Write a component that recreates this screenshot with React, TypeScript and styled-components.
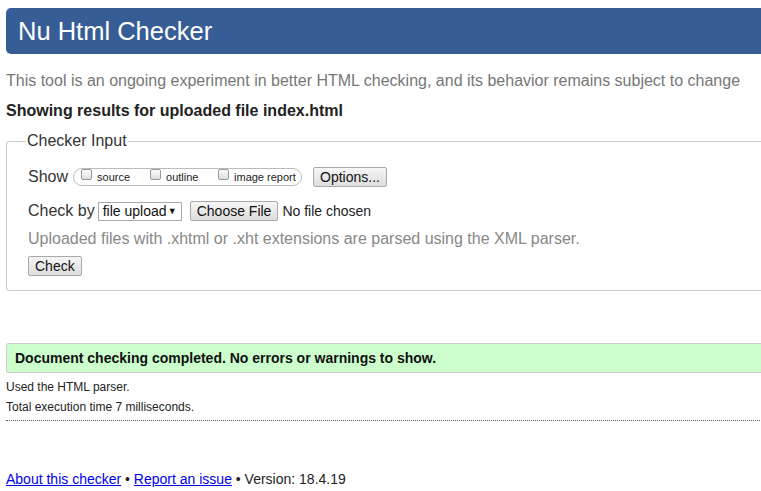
import React from 'react'
import styled, { createGlobalStyle } from 'styled-components'

const GlobalStyle = createGlobalStyle`
  html, body {
    margin: 0;
    padding: 0;
    background: #fff;
    overflow: hidden;
  }
  body {
    font-family: 'Liberation Sans', Arial, sans-serif;
    color: #222;
  }
`

const Page = styled.div`
  width: 790px;
  padding: 8px 0 0 6px;
`

const Banner = styled.h1`
  margin: 0;
  height: 46px;
  box-sizing: border-box;
  padding: 0 12px;
  display: flex;
  align-items: center;
  background: #365d95;
  color: #fff;
  font-size: 25.5px;
  font-weight: normal;
  border-radius: 5px 0 0 5px;
`

const Intro = styled.p`
  margin: 18px 0 0;
  font-size: 16px;
  color: #777;
`

const ResultsFor = styled.p`
  margin: 12px 0 0;
  font-size: 16px;
  font-weight: bold;
  color: #222;
`

const Fieldset = styled.fieldset`
  margin: 12px 0 0;
  padding: 6px 0 14px 21px;
  border: 1px solid #ccc;
  border-right: none;
  border-radius: 4px 0 0 4px;
`

const Legend = styled.legend`
  padding: 0 1px;
  margin-left: -2px;
  font-size: 16px;
  color: #333;
`

const Row = styled.div<{ $gap: number }>`
  display: flex;
  align-items: center;
  font-size: 16px;
  color: #333;
  height: 20px;
  margin-top: ${({ $gap }) => $gap}px;
`

const Pill = styled.div`
  display: flex;
  align-items: center;
  height: 18px;
  box-sizing: border-box;
  margin-left: 5px;
  padding: 0 5px 0 7px;
  border: 1px solid #bbb;
  border-radius: 9px;
  font-size: 11px;
  color: #222;
`

const Option = styled.label<{ $w: number }>`
  display: flex;
  align-items: center;
  width: ${({ $w }) => $w}px;
  white-space: nowrap;
`

const Box = styled.span`
  display: inline-block;
  width: 11px;
  height: 11px;
  box-sizing: border-box;
  border: 1px solid #999;
  border-radius: 2px;
  background: linear-gradient(#fcfcfc, #dedede);
  margin: -5px 5px 0 0;
`

const Btn = styled.span<{ $ml?: number }>`
  display: inline-flex;
  align-items: center;
  height: 20px;
  box-sizing: border-box;
  padding: 0 6px;
  margin-left: ${({ $ml }) => $ml ?? 0}px;
  border: 1px solid #a9a9a9;
  border-radius: 2px;
  background: linear-gradient(#f6f6f6, #dddddd);
  font-size: 14px;
  color: #111;
`

const Select = styled.span`
  display: inline-flex;
  align-items: center;
  justify-content: space-between;
  width: 84px;
  height: 19px;
  box-sizing: border-box;
  margin-left: 3px;
  padding: 0 4px;
  border: 1px solid #a9a9a9;
  background: #fff;
  font-size: 14px;
  color: #111;
`

const Arrow = styled.span`
  font-size: 9px;
`

const NoFile = styled.span`
  margin-left: 4px;
  font-size: 14px;
  color: #222;
`

const Hint = styled.div`
  margin-top: 9px;
  font-size: 16px;
  color: #888;
`

const Success = styled.div`
  margin-top: 52px;
  height: 30px;
  box-sizing: border-box;
  display: flex;
  align-items: center;
  padding-left: 8px;
  background: #ccffcc;
  border: 1px solid #ccc;
  border-right: none;
  border-radius: 3px 0 0 3px;
  font-size: 14px;
  font-weight: bold;
  color: #111;
`

const Detail = styled.p<{ $mt: number }>`
  margin: ${({ $mt }) => $mt}px 0 0;
  font-size: 12px;
  color: #222;
`

const Dotted = styled.div`
  margin-top: 6px;
  border-top: 1px dotted #555;
  height: 0;
`

const Footer = styled.p`
  margin: 50px 0 0;
  font-size: 14px;
  color: #222;
`

const Link = styled.a`
  color: #00e;
  text-decoration: underline;
`

export default function App() {
  return (
    <Page>
      <GlobalStyle />
      <Banner>Nu Html Checker</Banner>
      <Intro>This tool is an ongoing experiment in better HTML checking, and its behavior remains subject to change</Intro>
      <ResultsFor>Showing results for uploaded file index.html</ResultsFor>
      <Fieldset>
        <Legend>Checker Input</Legend>
        <Row $gap={11}>
          Show
          <Pill>
            <Option $w={69}><Box />source</Option>
            <Option $w={68}><Box />outline</Option>
            <Option $w={78}><Box />image report</Option>
          </Pill>
          <Btn $ml={11}>Options...</Btn>
        </Row>
        <Row $gap={14}>
          Check by
          <Select>file upload <Arrow>▼</Arrow></Select>
          <Btn $ml={8}>Choose File</Btn>
          <NoFile>No file chosen</NoFile>
        </Row>
        <Hint>Uploaded files with .xhtml or .xht extensions are parsed using the XML parser.</Hint>
        <Row $gap={8}>
          <Btn>Check</Btn>
        </Row>
      </Fieldset>
      <Success>Document checking completed. No errors or warnings to show.</Success>
      <Detail $mt={7}>Used the HTML parser.</Detail>
      <Detail $mt={6}>Total execution time 7 milliseconds.</Detail>
      <Dotted />
      <Footer>
        <Link href="#">About this checker</Link> • <Link href="#">Report an issue</Link> • Version: 18.4.19
      </Footer>
    </Page>
  )
}
